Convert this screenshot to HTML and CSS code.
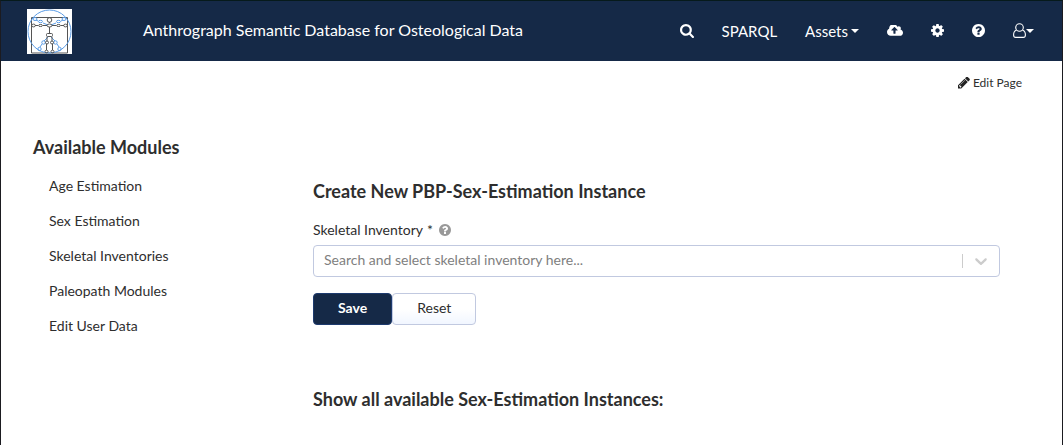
FILE: index.html
```html
<!DOCTYPE html>
<html lang="en">
<head>
<meta charset="utf-8">
<meta name="viewport" content="width=device-width, initial-scale=1">
<title>Anthrograph</title>
<link rel="stylesheet" href="styles.css">
</head>
<body>
<header class="navbar">
  <a class="logo" href="#" aria-label="Home">
    <svg viewBox="0 0 45 45" width="45" height="45" fill="none" stroke-width="1">
      <path stroke="#555" d="M4.500 8.500h36v35.500h-36z"/>
      <g stroke="#5b9ce6">
        <circle cx="22.500" cy="22.500" r="21.500"/>
        <path d="M9 11l2 1M16 14l5 2M36 11l-2 1M29 14l-5 2M21 28l-4 4M15 35l-2 3M24 28l4 4M30 35l2 3"/>
        <ellipse cx="8" cy="10" rx="2" ry="1.500"/><ellipse cx="13.500" cy="12.500" rx="2" ry="1.200"/>
        <ellipse cx="37" cy="10" rx="2" ry="1.500"/><ellipse cx="31.500" cy="12.500" rx="2" ry="1.200"/>
        <circle cx="16.500" cy="33.500" r="1.700"/><circle cx="12.500" cy="40" r="1.700"/>
        <circle cx="28.500" cy="33.500" r="1.700"/><circle cx="32.500" cy="40" r="1.700"/>
      </g>
      <g stroke="#555">
        <path d="M8 16.500h3M16 16.500h4M25 16.500h4M34 16.500h3M22.500 14v-1M22.500 18v6M20 28v4M25 28v4M19.500 35v6M25.500 35v6"/>
        <circle cx="22.500" cy="11" r="2.300"/>
        <ellipse cx="22.500" cy="16.500" rx="2.500" ry="1.500"/>
        <ellipse cx="6.500" cy="16.500" rx="1.800" ry="1.400"/><ellipse cx="13.500" cy="16.500" rx="2" ry="1"/>
        <ellipse cx="31.500" cy="16.500" rx="2" ry="1"/><ellipse cx="38.500" cy="16.500" rx="1.800" ry="1.400"/>
        <rect x="19.500" y="24.500" width="6" height="3" rx="1"/>
        <circle cx="20" cy="33.500" r="1.500"/><circle cx="25" cy="33.500" r="1.500"/>
        <ellipse cx="19.500" cy="42.500" rx="1.500" ry="1.300"/><ellipse cx="25.500" cy="42.500" rx="1.500" ry="1.300"/>
      </g>
    </svg>
  </a>
  <a class="brand" href="#">Anthrograph Semantic Database for Osteological Data</a>
  <nav class="nav">
    <a href="#" aria-label="Search"><svg class="icon" viewBox="64 128 1664 1664"><path d="M1216 832q0-185-131.500-316.500t-316.500-131.500-316.500 131.500-131.500 316.500 131.500 316.500 316.500 131.500 316.500-131.500 131.500-316.500zm512 832q0 52-38 90t-90 38q-54 0-90-38l-343-342q-179 124-399 124-143 0-273.500-55.500t-225-150-150-225-55.500-273.500 55.500-273.500 150-225 225-150 273.500-55.500 273.500 55.500 225 150 150 225 55.500 273.500q0 220-124 399l343 343q37 37 37 90z"/></svg></a>
    <a href="#">SPARQL</a>
    <button type="button">Assets<span class="caret"></span></button>
    <a href="#" aria-label="Upload"><svg class="icon wide" viewBox="-64 256 1920 1280"><path d="M1216 864q0-14-9-23l-352-352q-9-9-23-9t-23 9l-351 351q-10 12-10 24 0 14 9 23t23 9h224v352q0 13 9.500 22.500t22.500 9.500h192q13 0 22.500-9.500t9.500-22.500v-352h224q13 0 22.500-9.500t9.500-22.500zm640 288q0 159-112.500 271.500t-271.500 112.500h-1088q-185 0-316.500-131.500t-131.500-316.500q0-130 70-240t188-165q-2-30-2-43 0-212 150-362t362-150q156 0 285.500 87t188.500 231q71-62 166-62 106 0 181 75t75 181q0 76-41 138 130 31 213.500 135.500t83.500 238.500z"/></svg></a>
    <a href="#" aria-label="Settings"><svg class="icon small" viewBox="128 128 1536 1536"><path d="M1152 896q0-106-75-181t-181-75-181 75-75 181 75 181 181 75 181-75 75-181zm512-109v222q0 12-8 23t-20 13l-185 28q-19 54-39 91 35 50 107 138 10 12 10 25t-9 23q-27 37-99 108t-94 71q-12 0-26-9l-138-108q-44 23-91 38-16 136-29 186-7 28-36 28h-222q-14 0-24.500-8.500t-11.500-21.500l-28-184q-49-16-90-37l-141 107q-10 9-25 9-14 0-25-11-126-114-165-168-7-10-7-23 0-12 8-23 15-21 51-66.500t54-70.500q-27-50-41-99l-183-27q-13-2-21-12.500t-8-23.500v-222q0-12 8-23t19-13l186-28q14-46 39-92-40-57-107-138-10-12-10-24 0-10 9-23 26-36 98.500-107.500t94.500-71.500q13 0 26 10l138 107q44-23 91-38 16-136 29-186 7-28 36-28h222q14 0 24.500 8.500t11.500 21.500l28 184q49 16 90 37l142-107q9-9 24-9 13 0 25 10 129 119 165 170 7 8 7 22 0 12-8 23-15 21-51 66.500t-54 70.500q26 50 41 98l183 28q13 2 21 12.500t8 23.500z"/></svg></a>
    <a href="#" aria-label="Help"><svg class="icon small" viewBox="128 128 1536 1536"><path id="help" d="M1024 1376v-192q0-14-9-23t-23-9h-192q-14 0-23 9t-9 23v192q0 14 9 23t23 9h192q14 0 23-9t9-23zm256-672q0-88-55.500-163t-138.500-116-170-41q-243 0-371 213-15 24 8 42l132 100q7 6 19 6 16 0 25-12 53-68 86-92 34-24 86-24 48 0 85.500 26t37.500 59q0 38-20 61t-68 45q-63 28-115.500 86.500t-52.500 125.500v36q0 14 9 23t23 9h192q14 0 23-9t9-23q0-19 21.500-49.500t54.500-49.500q32-18 49-28.500t46-35 44.500-48 28-60.500 12.500-81zm384 192q0 209-103 385.500t-279.500 279.500-385.500 103-385.500-103-279.500-279.500-103-385.500 103-385.500 279.500-279.500 385.500-103 385.500 103 279.500 279.500 103 385.500z"/></svg></a>
    <button type="button" aria-label="Account"><svg class="user" viewBox="0 0 13 15" width="13" height="15" fill="none" stroke="#fff" stroke-width="1.100"><circle cx="6.500" cy="4.500" r="3.800"/><path d="M3.500 7.200C1.300 7.700.6 9.700.6 12c0 1.500.8 2.400 2.100 2.400h7.600c1.300 0 2.100-.9 2.100-2.400 0-2.300-.7-4.300-2.900-4.800"/></svg><span class="caret"></span></button>
  </nav>
</header>
<div class="toolbar">
  <a href="#"><svg class="pencil" viewBox="128 256 1536 1408"><path d="M491 1536l91-91-235-235-91 91v107h128v128h107zm523-928q0-22-22-22-10 0-17 7l-542 542q-7 7-7 17 0 22 22 22 10 0 17-7l542-542q7-7 7-17zm-54-192l416 416-832 832h-416v-416zm683 96q0 53-37 90l-166 166-416-416 166-165q36-38 90-38 53 0 91 38l235 234q37 39 37 91z"/></svg>Edit Page</a>
</div>
<div class="page">
  <aside>
    <h2>Available Modules</h2>
    <ul class="modules">
      <li><a href="#">Age Estimation</a></li>
      <li><a href="#">Sex Estimation</a></li>
      <li><a href="#">Skeletal Inventories</a></li>
      <li><a href="#">Paleopath Modules</a></li>
      <li><a href="#">Edit User Data</a></li>
    </ul>
  </aside>
  <main>
    <h2>Create New PBP-Sex-Estimation Instance</h2>
    <form>
      <div class="label-row">
        <label for="inventory">Skeletal Inventory<span class="required">*</span></label>
        <svg class="hint" viewBox="128 128 1536 1536" aria-hidden="true"><use href="#help"/></svg>
      </div>
      <div class="field">
        <select id="inventory">
          <option>Search and select skeletal inventory here...</option>
        </select>
        <span class="indicator"><svg viewBox="0 0 20 20" width="20" height="20"><path d="M4.516 7.548c0.436-0.446 1.043-0.481 1.576 0l3.908 3.747 3.908-3.747c0.533-0.481 1.141-0.446 1.574 0 0.436 0.445 0.408 1.197 0 1.615-0.406 0.418-4.695 4.502-4.695 4.502-0.217 0.223-0.502 0.335-0.787 0.335s-0.570-0.112-0.789-0.335c0 0-4.287-4.084-4.695-4.502s-0.436-1.170 0-1.615z"/></svg></span>
      </div>
      <div class="actions">
        <button class="btn save" type="button">Save</button>
        <button class="btn" type="reset">Reset</button>
      </div>
    </form>
    <h2>Show all available Sex-Estimation Instances:</h2>
  </main>
</div>
</body>
</html>
```
FILE: styles.css
```css
* { box-sizing: border-box; }
body {
  margin: 0;
  min-height: 100vh;
  border: 1px solid #1b1b20;
  border-top-color: #061a1b;
  border-bottom: 0;
  background: #fff;
  color: #2e2e2e;
  font: 14px/20px Lato, sans-serif;
}
a { color: inherit; text-decoration: none; }
button { font: inherit; color: inherit; }
h2 { margin: 0; font-size: 18px; line-height: 24px; font-weight: 700; }

.navbar {
  display: flex;
  align-items: center;
  height: 60px;
  padding: 0 28px 0 26px;
  background: #152947;
  color: #fff;
  font-size: 15px;
}
.logo { display: block; height: 45px; background: #fff; }
.brand { margin-left: 71px; padding-bottom: 2px; font-size: 16px; }
.nav { display: flex; align-items: center; gap: 28px; margin-left: auto; padding-bottom: 1px; }
.nav a, .nav button { display: flex; align-items: center; }
.nav button { padding: 0; border: 0; background: none; }
.icon { width: 14px; height: 14px; fill: #fff; }
.icon.small { width: 13px; height: 13px; }
.icon.wide { width: 16px; height: 11px; }
.caret {
  margin-left: 3px;
  border: 4px solid transparent;
  border-top-color: #fff;
  border-bottom: 0;
}
.user + .caret { margin-left: 0; }

.toolbar { display: flex; justify-content: flex-end; padding: 12px 40px 0 0; font-size: 12px; }
.toolbar a { display: flex; align-items: center; gap: 3px; }
.pencil { width: 12px; height: 12px; fill: #222; }

.page { display: grid; grid-template-columns: 280px 1fr; padding: 42px 62px 0 32px; }
.modules {
  display: grid;
  gap: 15px;
  margin: 17px 0 0;
  padding: 0 0 0 16px;
  list-style: none;
}
main { padding-top: 44px; }
.label-row { display: flex; align-items: center; gap: 6px; margin-top: 17px; }
.required { margin-left: 4px; }
.hint { width: 12px; height: 12px; fill: #999; }
.field { position: relative; margin-top: 5px; }
.field select {
  display: block;
  width: 100%;
  height: 32px;
  padding: 0 48px 2px 10px;
  border: 1px solid #c1c9e0;
  border-radius: 4px;
  appearance: none;
  background: #fff;
  color: #808080;
  font: inherit;
}
.indicator {
  position: absolute;
  top: 9px;
  right: 0;
  display: flex;
  align-items: center;
  height: 14px;
  padding: 0 9px 0 8px;
  border-left: 1px solid #ccc;
  fill: #ccc;
  pointer-events: none;
}
.actions { display: flex; margin: 16px 0 62px; }
.btn {
  height: 32px;
  padding: 0 24px 2px;
  border: 1px solid #c1c9e0;
  border-radius: 4px;
  background: linear-gradient(#fff 50%, #f1f6ff);
}
.btn.save { border-color: #1d3a6e; background: #152947; color: #fff; font-weight: 700; }
```
